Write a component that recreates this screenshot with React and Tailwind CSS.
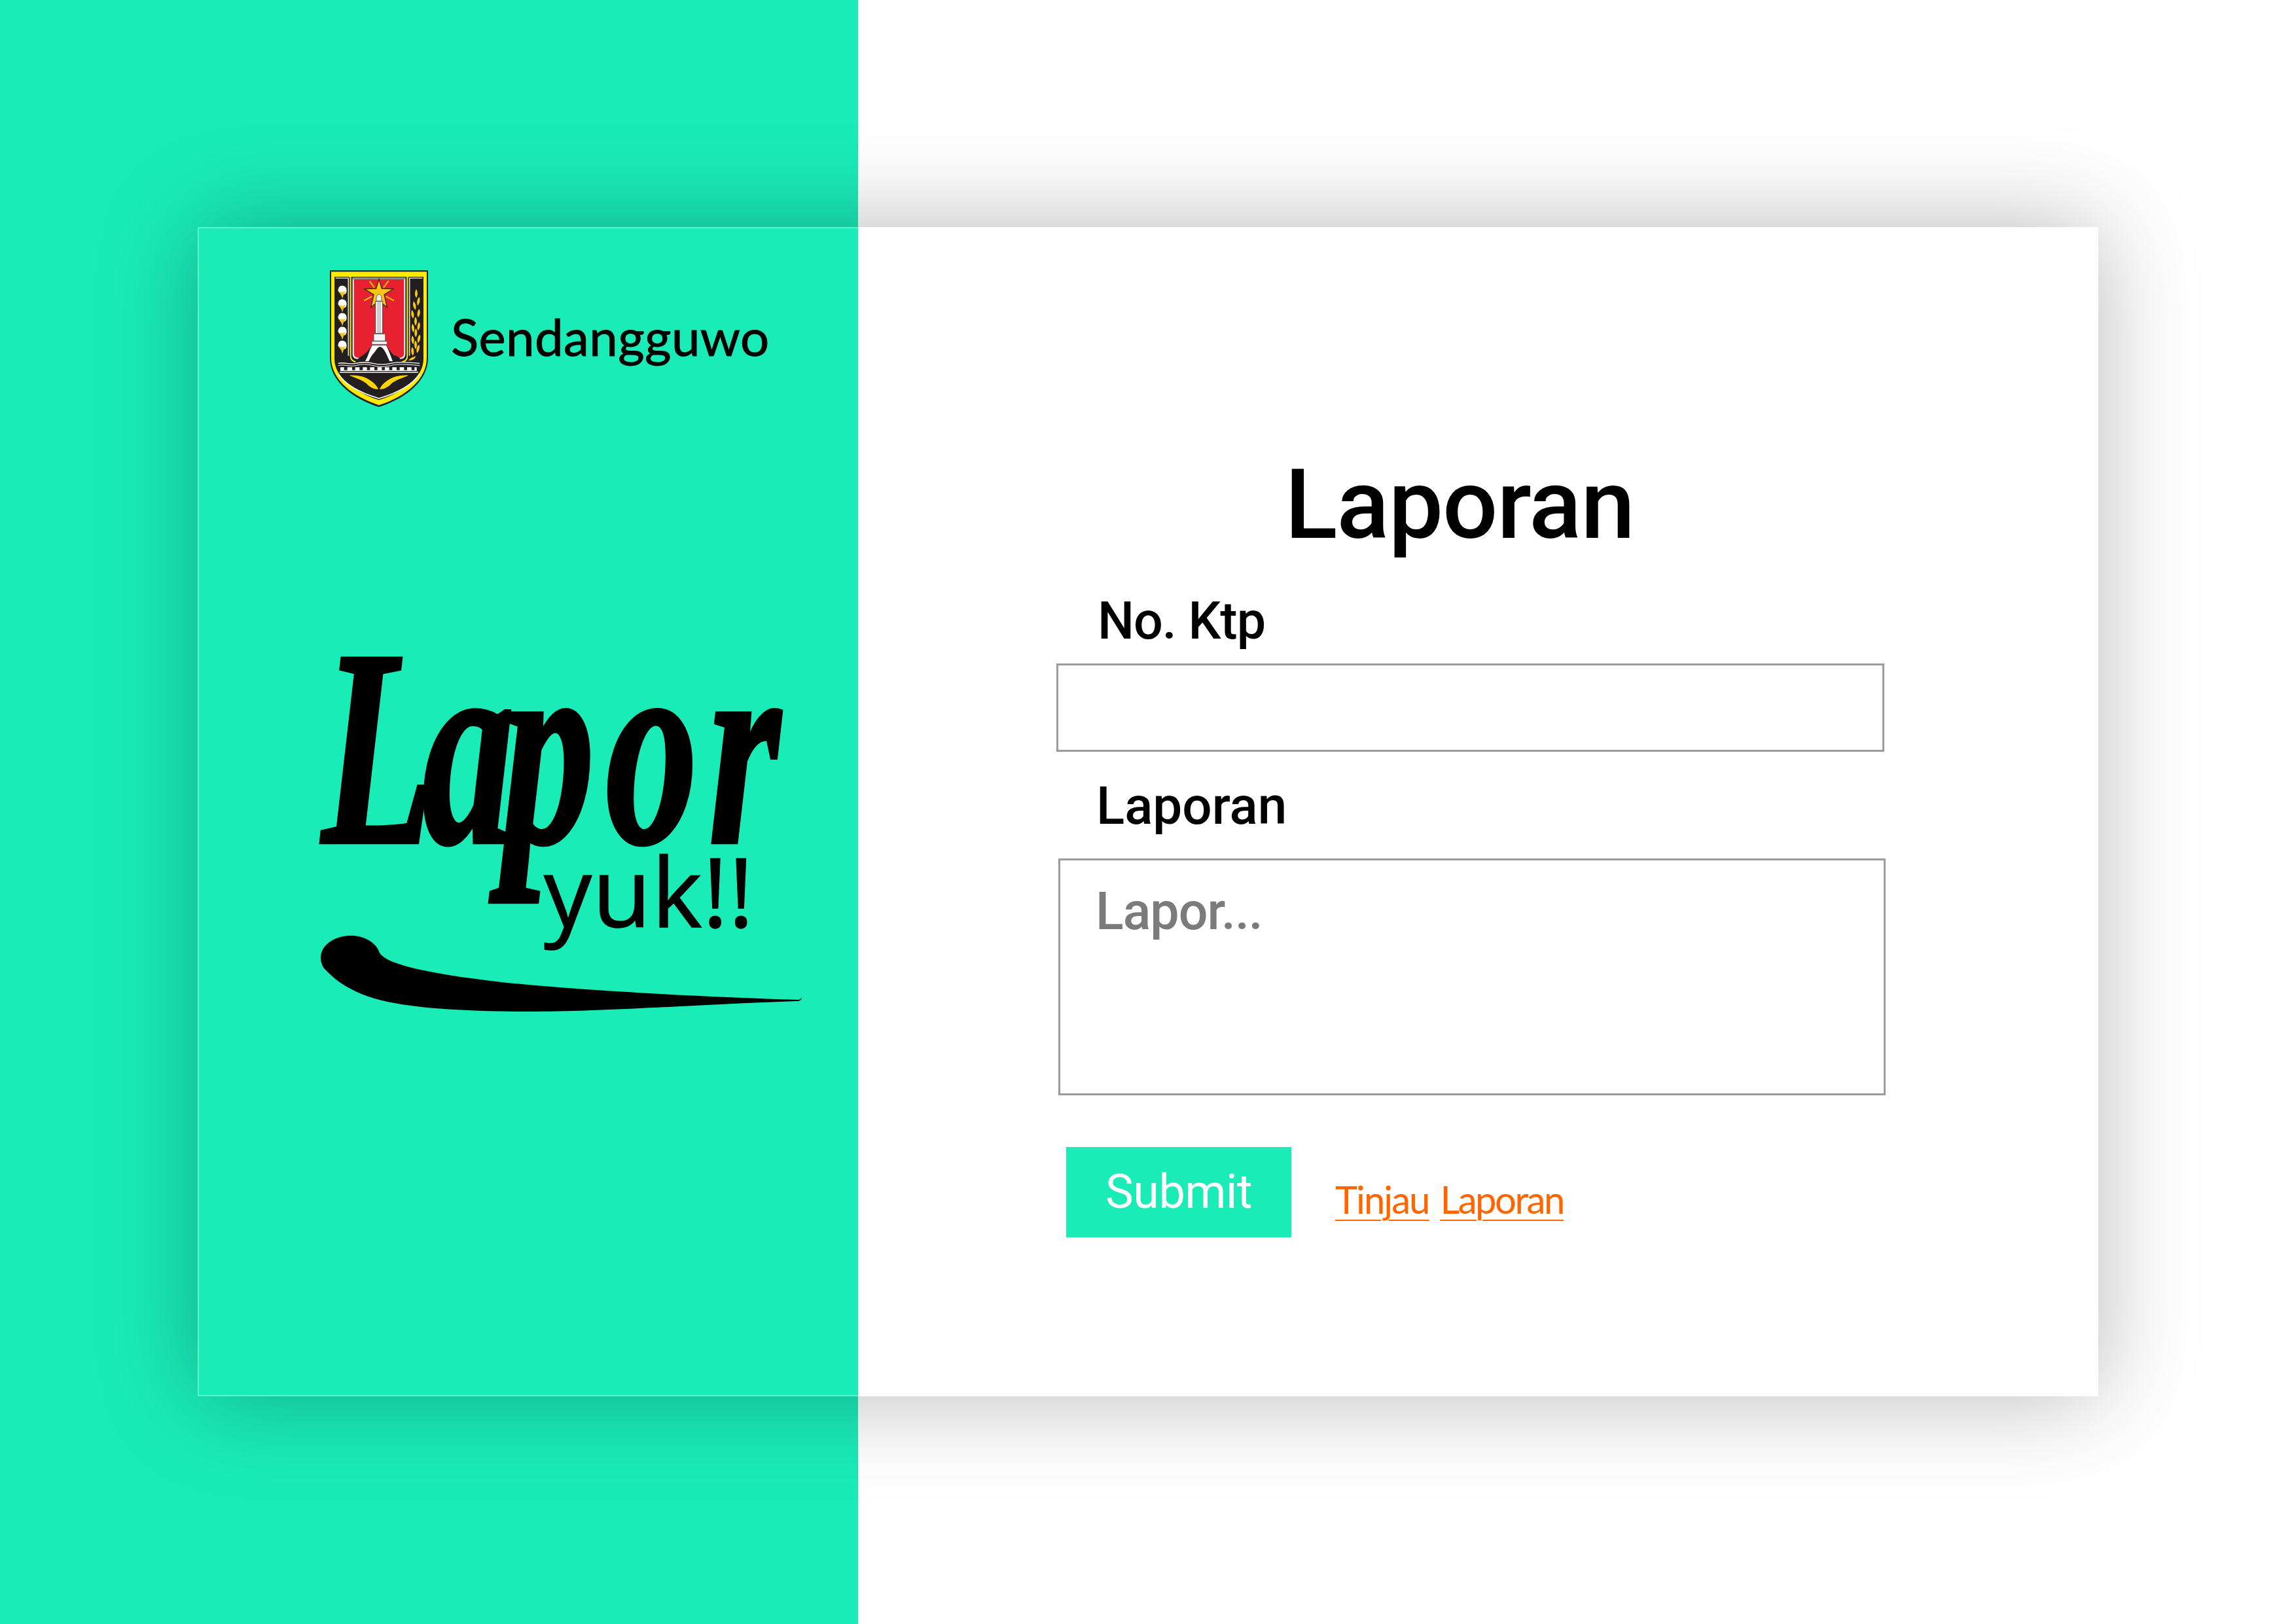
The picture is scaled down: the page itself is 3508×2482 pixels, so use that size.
const roboto = "font-['Roboto',sans-serif]";

function Flower({ y }) {
  return (
    <g transform={`translate(100 ${y})`}>
      <path d="M-20 -8 C-20 -28 -6 -32 2 -30 C14 -30 20 -18 18 -4 C16 8 8 10 4 6 C0 2 -14 8 -20 -8Z" fill="#fff" stroke="#cfcfcf" strokeWidth="1" />
      <path d="M-14 -6 C-8 0 -4 -4 0 0 C6 -6 8 -2 14 -6 C12 4 6 8 4 12 C3 18 2 24 -2 28 C-2 20 -4 16 -8 10 C-12 6 -14 2 -14 -6Z" fill="#f6c812" />
    </g>
  );
}

function Leaf({ x, y, r }) {
  return <path transform={`translate(${x} ${y}) rotate(${r})`} d="M0 -20 C8 -8 8 8 0 20 C-8 8 -8 -8 0 -20Z" fill="#fbc90f" />;
}

function Emblem() {
  return (
    <svg viewBox="42 38 450 627" className="w-[150px] h-[209px] shrink-0">
      <path d="M42 38H492V440C492 540 400 622 267 665C134 622 42 540 42 440Z" fill="#231f20" />
      <path d="M48 45H486V440C486 536 396 614 267 657C138 614 48 536 48 440Z" fill="#ffea00" />
      <path d="M63 68H471V445C471 525 385 595 267 633C149 595 63 525 63 445Z" fill="#231f20" />
      <path d="M80 512C110 560 180 600 267 626C354 600 424 560 454 512" fill="none" stroke="#fff" strokeWidth="5" />
      <path d="M131 68H137V430C137 448 145 455 160 458" fill="none" stroke="#ffea00" strokeWidth="6" />
      <path d="M403 68H397V430C397 448 389 455 374 458" fill="none" stroke="#ffea00" strokeWidth="6" />
      <path d="M68 74H127V430" fill="none" stroke="#ddd" strokeWidth="5" />
      <path d="M466 74H407V430" fill="none" stroke="#ddd" strokeWidth="5" />
      <path d="M146 72H388V420C388 440 378 445 362 445H172C156 445 146 440 146 420Z" fill="#fff" />
      <path d="M152 80H382V420C382 434 372 440 360 440H174C162 440 152 434 152 420Z" fill="#e7212f" />
      <path d="M146 72H388V80H146Z" fill="#8a8a8a" />
      <Flower y={140} />
      <Flower y={202} />
      <Flower y={265} />
      <Flower y={328} />
      <Flower y={392} />
      <Leaf x={438} y={145} r={0} />
      <Leaf x={430} y={200} r={-12} />
      <Leaf x={448} y={180} r={10} />
      <Leaf x={421} y={240} r={-8} />
      <Leaf x={449} y={235} r={8} />
      <Leaf x={435} y={272} r={0} />
      <Leaf x={423} y={303} r={-6} />
      <Leaf x={449} y={295} r={8} />
      <Leaf x={436} y={325} r={2} />
      <Leaf x={422} y={358} r={-6} />
      <Leaf x={450} y={352} r={12} />
      <Leaf x={435} y={380} r={0} />
      <Leaf x={421} y={410} r={-4} />
      <Leaf x={446} y={398} r={14} />
      <path d="M402 452C415 436 428 436 436 432C432 444 424 452 402 452Z" fill="#fbc90f" />
      <path d="M267 78L280 122L333 124L291 150L304 208L267 178L230 208L243 150L201 124L254 122Z" fill="#fdc50f" stroke="#3a2a10" strokeWidth="4" />
      <path d="M224 88L246 118M311 86L288 118M198 178L235 158M336 178L299 158" stroke="#fdc50f" strokeWidth="6" fill="none" />
      <path d="M255 165C255 155 262 150 267 146C272 150 279 155 279 165V180H255Z" fill="#eee" stroke="#333" strokeWidth="2" />
      <path d="M251 180H284V328H251Z" fill="#f2f2f2" stroke="#444" strokeWidth="3" />
      <path d="M263 182V326M272 182V326" stroke="#888" strokeWidth="3" />
      <path d="M243 330H296V362H243Z" fill="#f5f5f5" stroke="#444" strokeWidth="2" />
      <path d="M234 364H304V378H234Z" fill="#f5f5f5" stroke="#444" strokeWidth="2" />
      <path d="M164 455C172 436 196 430 212 412C224 398 230 390 236 380H300C310 398 322 416 336 428C350 432 364 436 368 455Z" fill="#231f20" />
      <path d="M204 455C216 436 222 408 236 382H300C310 402 318 422 330 455H316C306 434 298 412 286 398C280 390 270 386 264 392C256 398 250 412 240 422C232 430 226 444 220 455Z" fill="#fff" />
      <path d="M80 465C110 458 130 472 160 465S210 458 240 465S290 472 320 465S380 458 454 465" stroke="#fff" strokeWidth="4" fill="none" />
      <path d="M80 475C110 468 130 482 160 475S210 468 240 475S290 482 320 475S380 468 454 475" stroke="#fff" strokeWidth="3" fill="none" />
      <path d="M90 483H107V496H122V483H144V496H158V483H178V496H193V483H212V496H226V483H246V496H260V483H280V496H294V483H314V496H328V483H348V496H362V483H382V496H396V483H416V496H430V483H440V500H90Z" fill="#fff" />
      <path d="M87 506H447" stroke="#fff" strokeWidth="4" />
      <path d="M132 520C170 518 205 526 230 545C245 556 258 568 264 584C240 584 222 572 210 558C190 540 158 532 132 520Z" fill="#ffd400" />
      <path d="M402 520C364 518 329 526 304 545C289 556 276 568 270 584C294 584 312 572 324 558C344 540 376 532 402 520Z" fill="#ffd400" />
    </svg>
  );
}

function Swoosh() {
  return (
    <svg viewBox="37 1190 1480 292" preserveAspectRatio="none" className="block w-[736px] h-[116px] ml-[186px] -mt-[4px]">
      <path d="M37 1275C37 1225 80 1190 130 1190C170 1190 205 1215 216 1250C225 1290 320 1330 600 1370C800 1395 1100 1420 1505 1437C1512 1435 1515 1430 1515 1425C1516 1435 1510 1442 1500 1442C1200 1455 900 1482 700 1482C400 1482 220 1460 130 1395C90 1370 65 1340 45 1312C40 1300 37 1290 37 1275Z" fill="#000" />
    </svg>
  );
}

export default function App() {
  return (
    <div className="w-[3508px] h-[2482px] overflow-hidden pt-[347px] pl-[302px] bg-[linear-gradient(90deg,#1aecb8_1311px,#ffffff_1311px)]">
      <div className="flex w-[2904px] h-[1787px] bg-white shadow-[0_0_140px_rgba(0,0,0,0.28)]">
        <section className="w-[1009px] h-full bg-[#1aecb8] border-l-2 border-t-2 border-b-2 border-[#5df3cd] text-black">
          <div className="flex items-start pt-[64px] pl-[200px]">
            <Emblem />
            <span className="ml-[35px] mt-[62px] font-['Lato',sans-serif] text-[78px] leading-none tracking-[0.4px] [-webkit-text-stroke:1px_#000]">Sendangguwo</span>
          </div>
          <div className="mt-[331px] ml-[188px] h-[400px] whitespace-nowrap">
            <span className="inline-block origin-[0_83.75%] scale-x-[0.7] scale-y-[1.07] font-['Liberation_Serif',serif] font-bold italic text-[400px] leading-none [-webkit-text-stroke:6px_#000]">
              L<span className="-ml-[25px]">a</span><span className="-ml-[25px]">p</span><span className="ml-[25px]">o</span><span className="ml-[25px]">r</span>
            </span>
          </div>
          <div className="-mt-[65px] ml-[527px] font-['Open_Sans',sans-serif] text-[146px] leading-none tracking-[1px] whitespace-nowrap [-webkit-text-stroke:1.5px_#000]">yuk!!</div>
          <Swoosh />
        </section>
        <section className="flex-1 text-black">
          <h1 className={`${roboto} ml-[652px] mt-[350px] text-[149px] font-medium leading-none tracking-[-1.2px]`}>Laporan</h1>
          <label className={`${roboto} block ml-[366px] mt-[64px] text-[79px] font-medium leading-none tracking-[-1px]`}>No. Ktp</label>
          <input className="block ml-[303px] mt-[25px] w-[1265px] h-[135px] border-[3px] border-[#9b9b9b] bg-white" />
          <label className={`${roboto} block ml-[364px] mt-[43px] text-[80px] font-medium leading-none`}>Laporan</label>
          <textarea
            placeholder="Lapor..."
            className={`${roboto} block ml-[306px] mt-[40px] w-[1264px] h-[362px] resize-none overflow-hidden border-[3px] border-[#9b9b9b] bg-white pl-[54px] pt-[39px] text-[79px] font-medium leading-none tracking-[-1px] placeholder:text-[#7b7b7b] placeholder:opacity-100`}
          />
          <div className="flex items-start ml-[318px] mt-[79px]">
            <button className={`${roboto} w-[344px] h-[138px] bg-[#1aecb8] text-white text-[72px] leading-none tracking-[-0.5px]`}>Submit</button>
            <div className="flex gap-[17px] ml-[67px] mt-[51px] font-['Lato',sans-serif] text-[58px] leading-none text-[#ff6600] underline decoration-[2px] underline-offset-[9px]">
              <a href="#" className="tracking-[-2px]">Tinjau</a>
              <a href="#" className="tracking-[-2.5px]">Laporan</a>
            </div>
          </div>
        </section>
      </div>
    </div>
  );
}
